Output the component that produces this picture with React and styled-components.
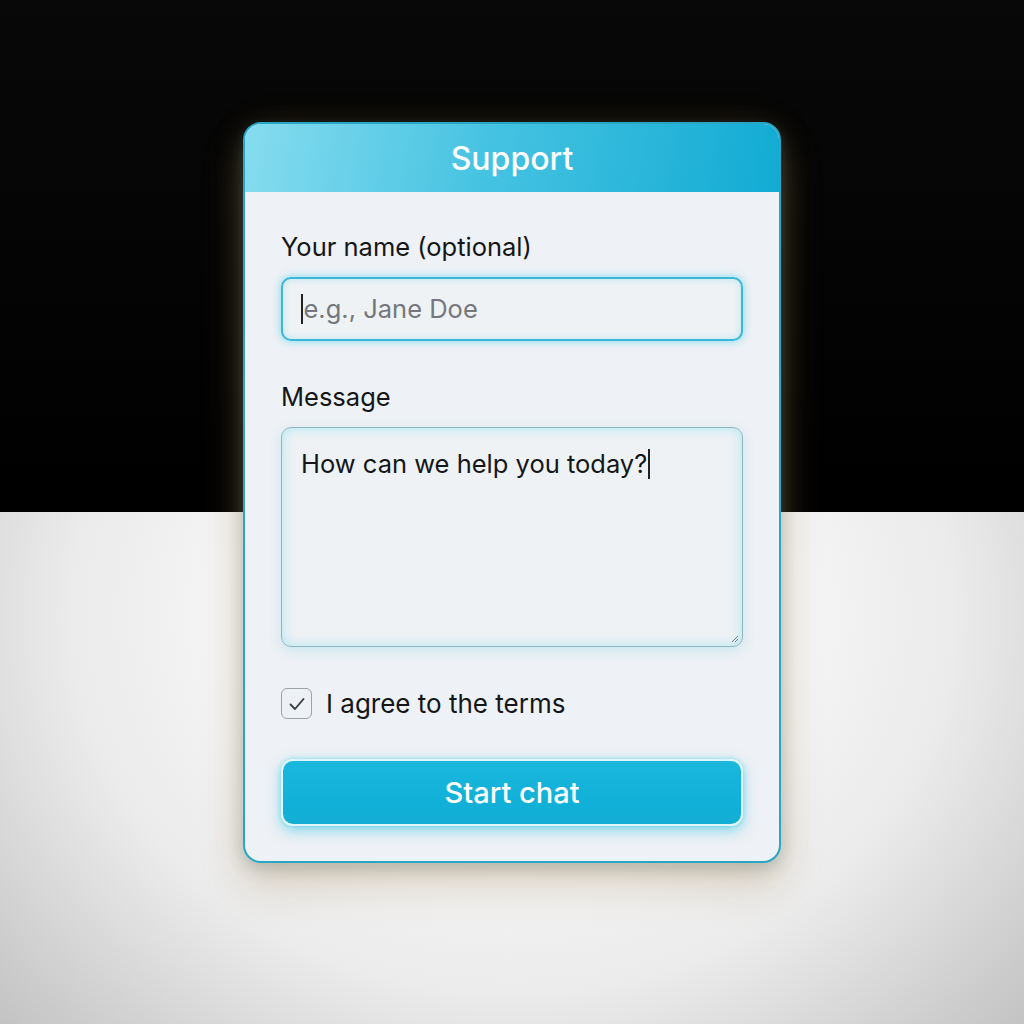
import React from "react";
import styled, { createGlobalStyle } from "styled-components";

const GlobalStyle = createGlobalStyle`
  * { box-sizing: border-box; }
  html, body {
    margin: 0;
    padding: 0;
    height: 1024px;
  }
  body {
    font-family: "Inter", "Noto Sans", "Liberation Sans", sans-serif;
    background-color: #000;
    background-image:
      linear-gradient(to bottom, #080808 0%, #000 50%, transparent 50%),
      radial-gradient(ellipse 72% 62% at 50% 60%, #fbfbfb 25%, #ebebeb 60%, #bdbdbd 100%);
  }
`;

const Stage = styled.main`
  height: 1024px;
  display: flex;
  justify-content: center;
  align-items: flex-start;
  padding-top: 122px;
`;

const Card = styled.section`
  width: 538px;
  height: 741px;
  border: 2px solid #2aa6c5;
  border-radius: 18px;
  overflow: hidden;
  background: #eef1f5;
  display: flex;
  flex-direction: column;
  box-shadow: 0 22px 40px rgba(170, 140, 90, 0.32), 0 6px 14px rgba(60, 120, 140, 0.25),
    0 0 30px rgba(150, 120, 70, 0.18);
`;

const Header = styled.header`
  height: 68px;
  display: flex;
  align-items: center;
  justify-content: center;
  background: linear-gradient(100deg, #86dcef 0%, #46c3e2 45%, #12abd3 100%);
`;

const Title = styled.h1`
  margin: 0;
  color: #fff;
  font-size: 32px;
  font-weight: 500;
`;

const Body = styled.form`
  flex: 1;
  display: flex;
  flex-direction: column;
  padding: 40px 36px 0 36px;
`;

const Field = styled.div`
  display: flex;
  flex-direction: column;
  gap: 15px;
  margin-bottom: ${(p) => p.$space}px;
`;

const Label = styled.label`
  font-size: 25.5px;
  line-height: 30px;
  color: #141618;
`;

const TextBox = styled.div`
  position: relative;
  height: ${(p) => (p.$multi ? 220 : 64)}px;
  border-radius: 10px;
  background: #eef2f5;
  display: flex;
  align-items: ${(p) => (p.$multi ? "flex-start" : "center")};
  padding: ${(p) => (p.$multi ? "21px 19px" : "0 17px")};
  font-size: 25.5px;
  line-height: 30px;
  border: ${(p) => (p.$multi ? "1.5px solid #90b6c0" : "2px solid #3bb8d7")};
  box-shadow: ${(p) =>
    p.$multi
      ? "inset 0 0 12px rgba(120, 220, 240, 0.55), 0 4px 12px rgba(120, 210, 230, 0.3)"
      : "0 0 9px rgba(60, 205, 235, 0.65), inset 0 0 7px rgba(80, 205, 235, 0.35)"};
`;

const Placeholder = styled.span`
  color: #74787c;
`;

const Value = styled.span`
  color: #141618;
`;

const Caret = styled.span`
  display: inline-block;
  flex-shrink: 0;
  width: 1.5px;
  height: 30px;
  background: #222;
  margin: 0 1px;
`;

const Grip = styled.svg`
  position: absolute;
  right: 3px;
  bottom: 3px;
`;

const CheckRow = styled.div`
  display: flex;
  align-items: center;
  gap: 14px;
  margin-bottom: 40px;
`;

const Box = styled.span`
  width: 31px;
  height: 31px;
  border: 1.5px solid #9aa1a7;
  border-radius: 6px;
  background: #eef1f4;
  display: flex;
  align-items: center;
  justify-content: center;
`;

const CheckText = styled.span`
  font-size: 26px;
  color: #141618;
`;

const Button = styled.button`
  height: 67px;
  border-radius: 12px;
  border: 2px solid #def6fb;
  background: linear-gradient(180deg, #1bb7dc 0%, #10b0d8 70%, #14aed4 100%);
  color: #fff;
  font-family: inherit;
  font-size: 29px;
  font-weight: 500;
  box-shadow: 0 5px 14px rgba(40, 195, 230, 0.5), 0 0 4px rgba(120, 220, 240, 0.8);
`;

export default function App() {
  return (
    <>
      <GlobalStyle />
      <Stage>
        <Card>
          <Header>
            <Title>Support</Title>
          </Header>
          <Body onSubmit={(e) => e.preventDefault()}>
            <Field $space={41}>
              <Label>Your name (optional)</Label>
              <TextBox>
                <Caret />
                <Placeholder>e.g., Jane Doe</Placeholder>
              </TextBox>
            </Field>
            <Field $space={41}>
              <Label>Message</Label>
              <TextBox $multi>
                <Value>How can we help you today?</Value>
                <Caret />
                <Grip width="10" height="10" viewBox="0 0 10 10">
                  <path d="M9 3 L3 9 M9 6 L6 9" stroke="#6f7f85" strokeWidth="1" />
                </Grip>
              </TextBox>
            </Field>
            <CheckRow>
              <Box>
                <svg width="20" height="20" viewBox="0 0 20 20">
                  <path d="M3.5 10.5 L8 15 L16.5 5" fill="none" stroke="#3a4146" strokeWidth="1.9" strokeLinecap="round" strokeLinejoin="round" />
                </svg>
              </Box>
              <CheckText>I agree to the terms</CheckText>
            </CheckRow>
            <Button type="submit">Start chat</Button>
          </Body>
        </Card>
      </Stage>
    </>
  );
}
